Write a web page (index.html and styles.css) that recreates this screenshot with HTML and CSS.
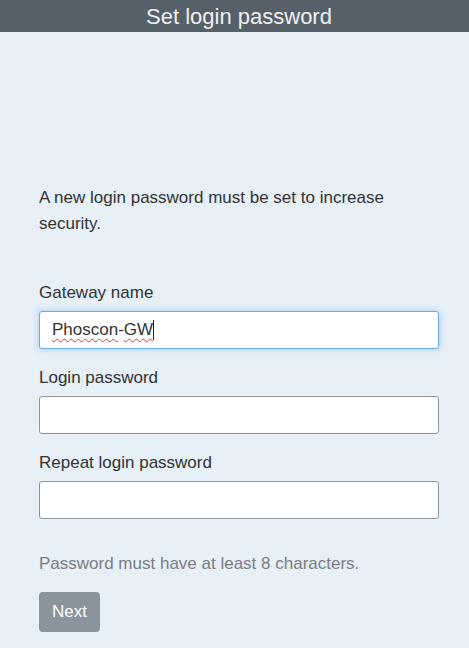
FILE: index.html
```html
<!DOCTYPE html>
<html lang="en">
<head>
<meta charset="utf-8">
<title>Set login password</title>
<link rel="stylesheet" href="styles.css">
</head>
<body>
<header class="topbar">Set login password</header>
<main class="content">
  <p class="intro">A new login password must be set to increase security.</p>
  <form class="form">
    <div class="field">
      <label class="label">Gateway name</label>
      <div class="input input-focus" role="textbox"><span class="typo">Phoscon</span>-<span class="typo">GW</span><span class="caret"></span></div>
    </div>
    <div class="field">
      <label class="label" for="pw1">Login password</label>
      <input class="input" id="pw1" type="password">
    </div>
    <div class="field">
      <label class="label" for="pw2">Repeat login password</label>
      <input class="input" id="pw2" type="password">
    </div>
    <p class="hint">Password must have at least 8 characters.</p>
    <button type="button" class="btn">Next</button>
  </form>
</main>
</body>
</html>
```
FILE: styles.css
```css
html, body {
  margin: 0;
  padding: 0;
  background: #e7eff7;
  font-family: "Liberation Sans", Arial, sans-serif;
  color: #333;
}
.topbar {
  height: 32px;
  line-height: 33px;
  padding-left: 9px;
  background: #566069;
  color: #f0f0f0;
  text-align: center;
  font-size: 22px;
}
.content {
  padding: 153px 30px 0 39px;
  width: 400px;
}
.intro {
  margin: 0;
  font-size: 17px;
  line-height: 26px;
}
.form {
  margin-top: 42px;
  display: flex;
  flex-direction: column;
}
.field {
  display: flex;
  flex-direction: column;
  gap: 5px;
  margin-bottom: 15px;
}
.label {
  font-size: 17px;
  line-height: 26px;
  padding-top: 1px;
}
.input {
  box-sizing: border-box;
  height: 38px;
  width: 400px;
  padding: 0 12px;
  border: 1px solid #8f969c;
  border-radius: 3px;
  background: #fff;
  font-family: inherit;
  font-size: 17px;
  color: #333;
  display: flex;
  align-items: center;
  margin: 0;
}
.input-focus {
  border-color: #66afe9;
  box-shadow: 0 0 6px rgba(102, 175, 233, 0.6);
}
.typo {
  text-decoration: underline wavy #e53935;
  text-decoration-thickness: 1px;
  text-underline-offset: 3px;
}
.caret {
  display: inline-block;
  width: 1px;
  height: 20px;
  background: #222;
}
.hint {
  margin: 17px 0 15px;
  font-size: 17px;
  line-height: 26px;
  color: #7a7e82;
}
.btn {
  align-self: flex-start;
  width: 61px;
  height: 40px;
  border: none;
  border-radius: 4px;
  background: #8a949c;
  color: #fff;
  font-family: inherit;
  font-size: 17px;
  padding: 0;
}
```
